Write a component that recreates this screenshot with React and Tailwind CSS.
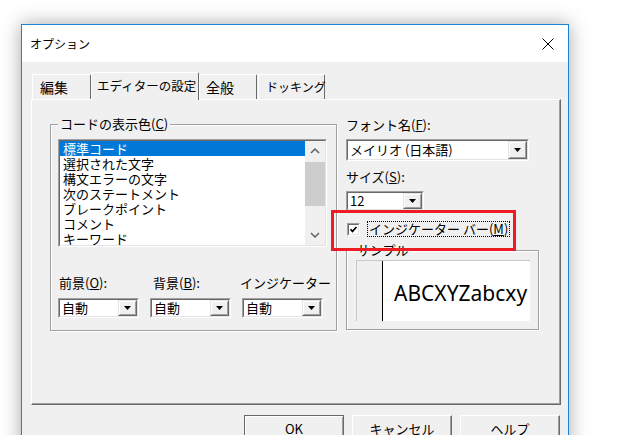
import React from "react";

const jp = "font-['Noto_Sans_CJK_JP',sans-serif]";

const items = [
  "標準コード",
  "選択された文字",
  "構文エラーの文字",
  "次のステートメント",
  "ブレークポイント",
  "コメント",
  "キーワード",
];

const Sunken = ({ className, children }) => (
  <div className={`border border-t-[#a0a0a0] border-l-[#a0a0a0] border-b-white border-r-white ${className}`}>
    <div className="h-full w-full border border-t-[#696969] border-l-[#696969] border-b-[#e3e3e3] border-r-[#e3e3e3] bg-white">
      {children}
    </div>
  </div>
);

const DropButton = () => (
  <div className="h-full w-[19px] border border-t-[#e3e3e3] border-l-[#e3e3e3] border-b-[#696969] border-r-[#696969]">
    <div className="h-full w-full border border-t-white border-l-white border-b-[#a0a0a0] border-r-[#a0a0a0] bg-[#f0f0f0] flex items-center justify-center">
      <svg width="7" height="4" viewBox="0 0 7 4">
        <polygon points="0,0 7,0 3.5,4" fill="#000" />
      </svg>
    </div>
  </div>
);

const Combo = ({ className, text }) => (
  <Sunken className={className}>
    <div className="h-full flex items-center">
      <span className="flex-1 pl-[2px] text-[13px] leading-[16px] text-black whitespace-nowrap">{text}</span>
      <DropButton />
    </div>
  </Sunken>
);

const ScrollBar = () => (
  <div className="w-[20px] h-full bg-[#f0f0f0] flex flex-col">
    <div className="h-[20px] flex items-center justify-center">
      <svg width="10" height="6" viewBox="0 0 10 6">
        <polyline points="1,5 5,1 9,5" fill="none" stroke="#606060" strokeWidth="1.5" />
      </svg>
    </div>
    <div className="mt-[1px] h-[44px] bg-[#cdcdcd]" />
    <div className="flex-1" />
    <div className="h-[20px] flex items-center justify-center">
      <svg width="10" height="6" viewBox="0 0 10 6">
        <polyline points="1,1 5,5 9,1" fill="none" stroke="#606060" strokeWidth="1.5" />
      </svg>
    </div>
  </div>
);

// size is passed separately so two text-[..] classes never compete
const Tab = ({ className, size, children, selected }) => (
  <div
    className={`${className} ${size} flex items-center whitespace-nowrap border-t border-l border-t-white border-l-white border-r border-r-[#696969] rounded-t-[2px] bg-[#f0f0f0] leading-[16px] ${
      selected ? "relative z-10 -mb-px" : ""
    }`}
  >
    {children}
  </div>
);

const Button = ({ children, isDefault }) => (
  <div
    className={`w-[100px] h-[28px] flex items-center justify-center text-[13px] leading-[16px] ${
      isDefault
        ? "border border-[#696969] shadow-[inset_1px_1px_0_#fff,inset_-1px_-1px_0_#a0a0a0]"
        : "border border-t-white border-l-white border-b-[#696969] border-r-[#696969] shadow-[inset_-1px_-1px_0_#a0a0a0]"
    }`}
  >
    {children}
  </div>
);

export default function App() {
  return (
    <div className={`w-[620px] h-[435px] overflow-hidden bg-white pt-[24px] pl-[21px] text-black ${jp}`}>
      <div className="w-[548px] h-[440px] border border-[#1883d7] bg-[#f0f0f0] shadow-[0_0_18px_rgba(0,0,0,0.35)]">
        {/* title bar */}
        <div className="h-[37px] bg-white flex items-center justify-between pl-[8px] pr-[14px]">
          <span className="text-[12px] leading-[16px]">オプション</span>
          <svg width="12" height="12" viewBox="0 0 12 12">
            <line x1="0.5" y1="0.5" x2="11.5" y2="11.5" stroke="#000" strokeWidth="1" />
            <line x1="11.5" y1="0.5" x2="0.5" y2="11.5" stroke="#000" strokeWidth="1" />
          </svg>
        </div>

        <div className="pl-[9px] pt-[10px]">
          {/* tabs */}
          <div className="flex items-end h-[27px]">
            <Tab className="ml-[1px] w-[59px] h-[25px] pl-[7px]" size="text-[14px]">編集</Tab>
            <Tab className="w-[108px] h-[28px] pl-[5px] pb-[1px]" size="text-[12.5px]" selected>
              エディターの設定
            </Tab>
            <Tab className="w-[58px] h-[25px] pl-[6px]" size="text-[14px]">全般</Tab>
            <Tab className="ml-[1px] w-[67px] h-[25px] pl-[7px]" size="text-[12px]">ドッキング</Tab>
          </div>

          {/* panel */}
          <div className="relative w-[530px] h-[306px] border-t border-l border-t-white border-l-white border-r border-b border-r-[#696969] border-b-[#696969]">
            <div className="h-full w-full border-r border-b border-r-[#a0a0a0] border-b-[#a0a0a0] flex items-start pl-[18px] text-[13px] leading-[16px]">
              {/* left group */}
              <fieldset className="mt-[16px] w-[287px] h-[215px] border border-[#a0a0a0] shadow-[inset_1px_1px_0_#fff,1px_1px_0_#fff]">
                <legend className="ml-[7px] px-[2px] bg-[#f0f0f0]">
                  コードの表示色(<u>C</u>)
                </legend>
                <Sunken className="ml-[7px] mt-[7px] w-[269px] h-[108px]">
                  <div className="h-full flex">
                    <div className="flex-1">
                      {items.map((it, i) => (
                        <div
                          key={it}
                          className={`h-[15px] leading-[15px] pl-[3px] whitespace-nowrap ${
                            i === 0 ? "bg-[#0078d7] text-white" : ""
                          }`}
                        >
                          {it}
                        </div>
                      ))}
                    </div>
                    <ScrollBar />
                  </div>
                </Sunken>
                <div className="ml-[7px] mt-[28px] flex gap-[11px]">
                  <div className="w-[81px]">
                    <div className="pl-[1px]">
                      前景(<u>O</u>):
                    </div>
                    <Combo className="mt-[7px] h-[20px] w-[81px]" text="自動" />
                  </div>
                  <div className="w-[81px]">
                    <div className="pl-[3px]">
                      背景(<u>B</u>):
                    </div>
                    <Combo className="mt-[7px] h-[20px] w-[81px]" text="自動" />
                  </div>
                  <div className="w-[81px]">
                    <div className="-ml-[2px] whitespace-nowrap">インジケーター</div>
                    <Combo className="mt-[7px] h-[20px] w-[81px]" text="自動" />
                  </div>
                </div>
              </fieldset>

              {/* right column */}
              <div className="ml-[9px] w-[193px]">
                <div className="mt-[17px]">
                  フォント名(<u>F</u>):
                </div>
                <Combo className="mt-[6px] w-[183px] h-[22px]" text="メイリオ (日本語)" />
                <div className="mt-[8px]">
                  サイズ(<u>S</u>):
                </div>
                <Combo className="mt-[6px] w-[78px] h-[20px]" text="12" />
                <div className="mt-[10px] h-[16px] flex items-center pl-[1px]">
                  <Sunken className="w-[13px] h-[13px]">
                    <div className="h-full flex items-center justify-center">
                      <svg width="9" height="9" viewBox="0 0 9 9">
                        <polyline points="1.5,4.2 3.5,6.4 7.5,2" fill="none" stroke="#000" strokeWidth="1.7" />
                      </svg>
                    </div>
                  </Sunken>
                  <div className="ml-[7px] h-[16px] border border-dotted border-black px-[1px] leading-[14px] whitespace-nowrap">
                    インジケーター バー(<u>M</u>)
                  </div>
                </div>
                <fieldset className="mt-[5px] w-[193px] h-[88px] border border-[#a0a0a0] shadow-[inset_1px_1px_0_#fff,1px_1px_0_#fff]">
                  <legend className="ml-[8px] px-[2px] bg-[#f0f0f0]">サンプル</legend>
                  <div className="ml-[9px] mt-[2px] w-[174px] h-[61px] flex border-t border-l border-[#c8c8c8]">
                    <div className="w-[25px] bg-[#f0f0f0]" />
                    <div className="w-px bg-black" />
                    <div className="flex-1 bg-white flex items-center pl-[11px] pt-[4px] overflow-hidden">
                      <span className="font-['Noto_Sans',sans-serif] text-[21px] leading-none whitespace-nowrap">
                        ABCXYZabcxy
                      </span>
                    </div>
                  </div>
                </fieldset>
              </div>
            </div>

            {/* red annotation box */}
            <div className="absolute left-[299px] top-[110px] w-[185px] h-[41px] border-[3px] border-[#ed1c24]" />
          </div>

          {/* buttons */}
          <div className="mt-[10px] w-[530px] flex justify-end gap-[8px] pr-[1px]">
            <Button isDefault>OK</Button>
            <Button>キャンセル</Button>
            <Button>ヘルプ</Button>
          </div>
        </div>
      </div>
    </div>
  );
}
